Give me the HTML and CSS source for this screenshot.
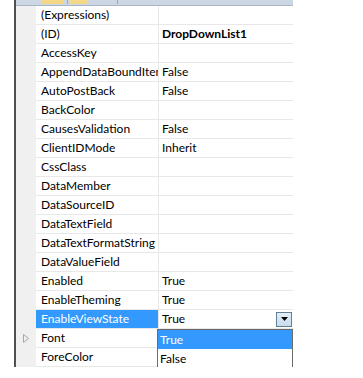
FILE: index.html
```html
<!DOCTYPE html>
<html>
<head>
<meta charset="utf-8">
<link rel="stylesheet" href="styles.css">
</head>
<body>
<div class="window">
  <div class="toolbar">
    <span class="tb-btn b1"></span>
    <span class="tb-btn b2"></span>
    <span class="tb-sep s1"></span>
    <span class="tb-sep s2"></span>
  </div>
  <div class="grid">
    <div class="row"><div class="gutter"></div><div class="name">(Expressions)</div><div class="value"></div></div>
    <div class="row"><div class="gutter"></div><div class="name">(ID)</div><div class="value bold">DropDownList1</div></div>
    <div class="row"><div class="gutter"></div><div class="name">AccessKey</div><div class="value"></div></div>
    <div class="row"><div class="gutter"></div><div class="name">AppendDataBoundItems</div><div class="value">False</div></div>
    <div class="row"><div class="gutter"></div><div class="name">AutoPostBack</div><div class="value">False</div></div>
    <div class="row"><div class="gutter"></div><div class="name">BackColor</div><div class="value"></div></div>
    <div class="row"><div class="gutter"></div><div class="name">CausesValidation</div><div class="value">False</div></div>
    <div class="row"><div class="gutter"></div><div class="name">ClientIDMode</div><div class="value">Inherit</div></div>
    <div class="row"><div class="gutter"></div><div class="name">CssClass</div><div class="value"></div></div>
    <div class="row"><div class="gutter"></div><div class="name">DataMember</div><div class="value"></div></div>
    <div class="row"><div class="gutter"></div><div class="name">DataSourceID</div><div class="value"></div></div>
    <div class="row"><div class="gutter"></div><div class="name">DataTextField</div><div class="value"></div></div>
    <div class="row"><div class="gutter"></div><div class="name">DataTextFormatString</div><div class="value"></div></div>
    <div class="row"><div class="gutter"></div><div class="name">DataValueField</div><div class="value"></div></div>
    <div class="row"><div class="gutter"></div><div class="name">Enabled</div><div class="value">True</div></div>
    <div class="row"><div class="gutter"></div><div class="name">EnableTheming</div><div class="value">True</div></div>
    <div class="row selected"><div class="gutter"></div><div class="name">EnableViewState</div><div class="value"><span class="val-text">True</span><span class="dd-btn"><svg width="7" height="4" viewBox="0 0 7 4"><path d="M0 0H7L3.5 4Z" fill="#000"/></svg></span></div></div>
    <div class="row"><div class="gutter"><svg class="expander" width="6" height="9" viewBox="0 0 6 9"><path d="M0.5 0.5L5.5 4.5L0.5 8.5Z" fill="none" stroke="#a6a6a6"/></svg></div><div class="name">Font</div><div class="value"></div></div>
    <div class="row"><div class="gutter"></div><div class="name">ForeColor</div><div class="value"></div></div>
    <div class="dropdown">
      <div class="dd-item active">True</div>
      <div class="dd-item">False</div>
    </div>
  </div>
</div>
</body>
</html>
```
FILE: styles.css
```css
html, body {
  margin: 0;
  padding: 0;
  background: #fff;
}
body {
  font-family: Lato, "Liberation Sans", sans-serif;
  font-size: 12px;
  color: #000;
}
.window {
  margin-left: 14px;
  width: 277px;
  border-left: 2px solid #505050;
}
.toolbar {
  position: relative;
  height: 5px;
  background: #cdd7e3;
  border-bottom: 1px solid #a9b6c6;
}
.tb-btn {
  position: absolute;
  top: 0;
  height: 4px;
  background: #f4d886;
}
.b1 { left: 25px; width: 22px; }
.b2 { left: 54px; width: 18px; }
.tb-sep {
  position: absolute;
  top: 0;
  width: 1px;
  height: 4px;
  background: #9aa6b6;
}
.s1 { left: 51px; }
.s2 { left: 101px; }
.grid {
  position: relative;
  height: 361px;
  overflow: hidden;
}
.row {
  display: flex;
  height: 19px;
}
.gutter {
  width: 20px;
  flex: none;
  background: #f0f0f0;
  display: flex;
  align-items: center;
  justify-content: center;
}
.expander {
  margin-left: 0;
}
.name {
  width: 117px;
  flex: none;
  padding-left: 5px;
  border-right: 1px solid #e8e8e8;
  border-bottom: 1px solid #e8e8e8;
  white-space: nowrap;
  overflow: hidden;
  line-height: 18px;
}
.value {
  flex: 1;
  padding-left: 3px;
  border-bottom: 1px solid #e8e8e8;
  line-height: 18px;
  display: flex;
  align-items: center;
  white-space: nowrap;
}
.bold {
  font-weight: bold;
}
.selected .name {
  background: #3399ff;
  color: #fff;
}
.val-text {
  flex: 1;
}
.dd-btn {
  width: 14px;
  height: 13px;
  margin-right: 1px;
  border: 1px solid #5f7f92;
  background: linear-gradient(#e3eef8, #c6dcee);
  display: flex;
  align-items: center;
  justify-content: center;
}
.dropdown {
  position: absolute;
  left: 141px;
  top: 323px;
  width: 134px;
  height: 60px;
  border: 1px solid #6b6b6b;
  background: #fff;
}
.dd-item {
  height: 19px;
  line-height: 19px;
  padding-left: 2px;
}
.dd-item.active {
  background: #3399ff;
  color: #fff;
}
```
